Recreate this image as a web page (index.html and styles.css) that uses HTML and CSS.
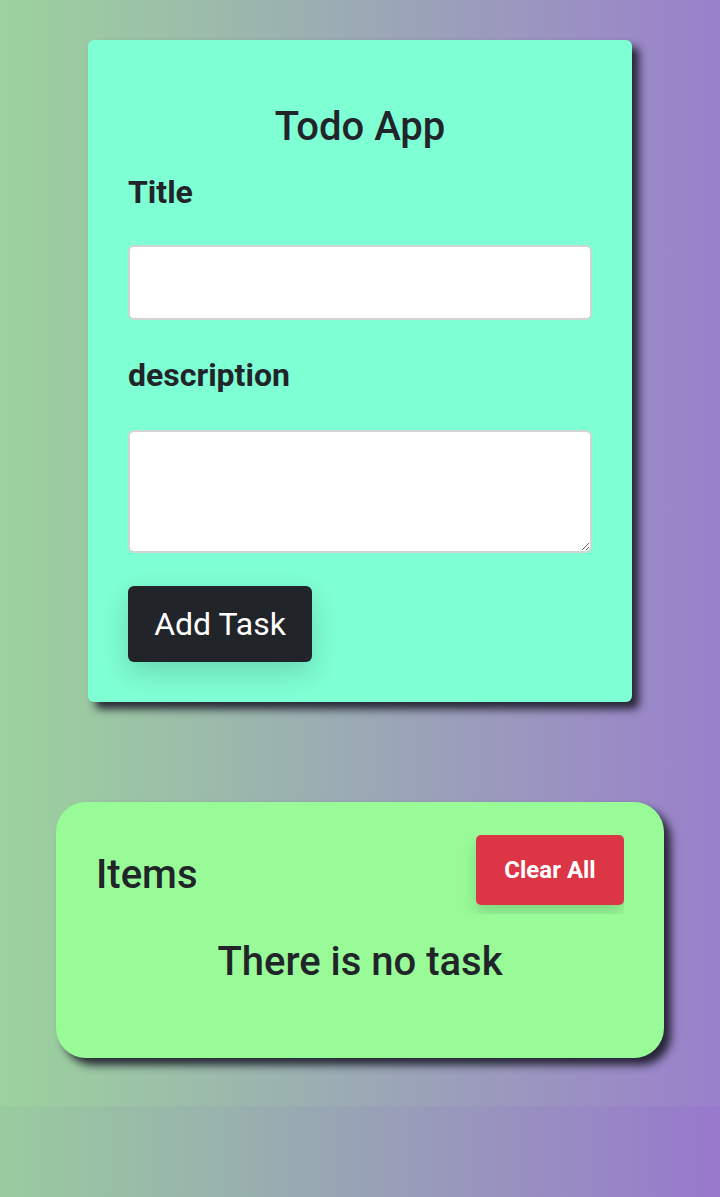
FILE: index.html
```html
<!DOCTYPE html>
<html lang="en">
<head>
<meta charset="utf-8">
<title>Todo App</title>
<link rel="stylesheet" href="styles.css">
</head>
<body>
  <div class="todo-card">
    <h1 class="todo-title">Todo App</h1>
    <label class="field-label label-title" for="title">Title</label>
    <input class="field-input" id="title" type="text">
    <label class="field-label label-desc" for="desc">description</label>
    <textarea class="field-area" id="desc"></textarea>
    <button class="add-btn" type="button">Add Task</button>
  </div>

  <div class="items-card">
    <div class="items-header">
      <h2 class="items-title">Items</h2>
      <div class="clear-wrap">
        <button class="clear-btn" type="button">Clear All</button>
      </div>
    </div>
    <p class="empty-msg">There is no task</p>
  </div>
</body>
</html>
```

FILE: styles.css
```css
html {
  background: linear-gradient(to right, #99cc9f, #9879cd);
}

body {
  margin: 0;
  padding: 40px 0 48px;
  background: linear-gradient(to right, #9cd39d, #9a80cc);
  font-family: Roboto, "Liberation Sans", Arial, sans-serif;
  color: #212529;
}

.todo-card {
  width: 544px;
  height: 662px;
  margin: 0 auto;
  box-sizing: border-box;
  background: #7fffd4;
  border-radius: 6px;
  padding: 63px 40px 40px;
  box-shadow: 7px 7px 9px rgba(25, 25, 40, 0.9);
  display: flex;
  flex-direction: column;
  align-items: flex-start;
}

.todo-title {
  align-self: stretch;
  margin: 0;
  font-size: 40px;
  font-weight: 500;
  line-height: 48px;
  text-align: center;
}

.field-label {
  display: block;
  font-size: 32px;
  font-weight: 700;
  line-height: 38px;
}

.label-title {
  margin-top: 22px;
}

.label-desc {
  margin-top: 36px;
}

.field-input,
.field-area {
  display: block;
  align-self: stretch;
  box-sizing: border-box;
  background: #fff;
  border: 2px solid #d0d4d6;
  border-radius: 6px;
  font-family: inherit;
  font-size: 24px;
  padding: 8px 14px;
  margin: 34px 0 0;
}

.field-input {
  height: 75px;
}

.field-area {
  margin-top: 36px;
  height: 123px;
  resize: vertical;
}

.add-btn {
  margin-top: 33px;
  height: 76px;
  width: 184px;
  padding: 0;
  border: none;
  border-radius: 6px;
  background: #212529;
  color: #fff;
  font-family: inherit;
  font-size: 32px;
  font-weight: 400;
  box-shadow: 0 10px 28px rgba(0, 0, 0, 0.16);
}

.items-card {
  width: 608px;
  height: 256px;
  margin: 100px auto 0;
  box-sizing: border-box;
  background: #98fb98;
  border-radius: 30px;
  padding: 33px 40px 0;
  box-shadow: 7px 7px 9px rgba(25, 25, 40, 0.9);
}

.items-header {
  display: flex;
  justify-content: space-between;
  align-items: flex-start;
}

.items-title {
  margin: 16px 0 0;
  font-size: 40px;
  font-weight: 500;
  line-height: 48px;
}

.clear-wrap {
  overflow: hidden;
  padding: 0 0 9px 21px;
}

.clear-btn {
  display: block;
  width: 148px;
  height: 70px;
  padding: 0;
  border: none;
  border-radius: 5px;
  background: #dc3545;
  color: #fff;
  font-family: inherit;
  font-size: 24px;
  font-weight: 700;
  box-shadow: 0 8px 16px rgba(0, 0, 0, 0.15);
}

.empty-msg {
  margin: 24px 0 0;
  font-size: 40px;
  font-weight: 500;
  line-height: 48px;
  text-align: center;
}
```
